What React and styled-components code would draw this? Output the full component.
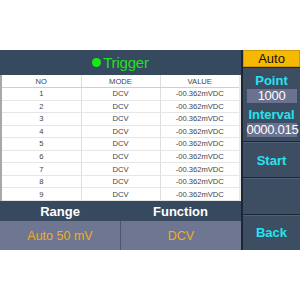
import styled, { createGlobalStyle } from "styled-components";

const rows = [1, 2, 3, 4, 5, 6, 7, 8, 9];

export default function App() {
    return (
        <>
            <Global />
            <Screen>
                <LeftPane>
                    <Title>
                        <Dot />
                        Trigger
                    </Title>
                    <TableWrap>
                        <Table>
                            <thead>
                                <tr>
                                    <th>NO</th>
                                    <th>MODE</th>
                                    <th>VALUE</th>
                                </tr>
                            </thead>
                            <tbody>
                                {rows.map(n => (
                                    <tr key={n}>
                                        <td>{n}</td>
                                        <td>DCV</td>
                                        <td>-00.362mVDC</td>
                                    </tr>
                                ))}
                            </tbody>
                        </Table>
                    </TableWrap>
                    <LabelRow>
                        <span>Range</span>
                        <span>Function</span>
                    </LabelRow>
                    <ValueRow>
                        <ValueCell>Auto 50 mV</ValueCell>
                        <ValueCell>DCV</ValueCell>
                    </ValueRow>
                </LeftPane>
                <RightPane>
                    <AutoButton>Auto</AutoButton>
                    <Settings>
                        <SetLabel>Point</SetLabel>
                        <SetValue>1000</SetValue>
                        <SetLabel>Interval</SetLabel>
                        <SetValue>0000.015</SetValue>
                    </Settings>
                    <SideButton>Start</SideButton>
                    <SideButton />
                    <SideButton>Back</SideButton>
                </RightPane>
            </Screen>
        </>
    );
}

const Global = createGlobalStyle`
    body {
        margin: 0;
        background: #ffffff;
        font-family: "Liberation Sans", Arial, sans-serif;
    }
`

const Screen = styled.div`
    margin-top: 50px;
    width: 300px;
    height: 200px;
    display: flex;
    background-color: #1c2733;
`

const LeftPane = styled.div`
    width: 241px;
    display: flex;
    flex-direction: column;
    background-color: #36495e;
`

const Title = styled.div`
    height: 25px;
    display: flex;
    align-items: center;
    justify-content: center;
    color: #22e022;
    font-size: 15px;
    letter-spacing: -0.2px;
`

const Dot = styled.span`
    width: 9px;
    height: 9px;
    border-radius: 50%;
    background-color: #18e818;
    margin-right: 2px;
`

const TableWrap = styled.div`
    height: 126px;
    background-color: #ffffff;
    border-left: 2px solid #a8a8a8;
    border-right: 2px solid #e8e8e8;
    box-sizing: border-box;
`

const Table = styled.table`
    width: 100%;
    height: 100%;
    border-collapse: collapse;
    table-layout: fixed;
    th, td {
        border-right: 1px solid #dedede;
        border-bottom: 1px solid #e6e6e6;
        text-align: center;
        font-size: 7.6px;
        color: #444444;
        font-weight: normal;
        padding: 0;
    }
    th:last-child, td:last-child {
        border-right: none;
    }
    th {
        height: 12px;
        border-bottom: 1px solid #cfcfcf;
    }
`

const LabelRow = styled.div`
    height: 20px;
    display: grid;
    grid-template-columns: 120px 1fr;
    align-items: center;
    span {
        text-align: center;
        color: #ffffff;
        font-weight: bold;
        font-size: 13px;
    }
`

const ValueRow = styled.div`
    height: 29px;
    display: grid;
    grid-template-columns: 120px 1fr;
`

const ValueCell = styled.div`
    display: flex;
    align-items: center;
    justify-content: center;
    background-color: #6f7692;
    color: #f0ad1c;
    font-size: 12.5px;
    & + & {
        border-left: 1px solid #4a5670;
    }
`

const RightPane = styled.div`
    margin-left: 2px;
    flex: 1;
    display: flex;
    flex-direction: column;
    gap: 1px;
`

const AutoButton = styled.div`
    height: 15px;
    display: flex;
    align-items: center;
    justify-content: center;
    background-color: #f6b800;
    border: 1px solid #d09a00;
    color: #111111;
    font-size: 13px;
`

const Settings = styled.div`
    height: 73px;
    display: flex;
    flex-direction: column;
    align-items: center;
    background-color: #3d4e63;
    padding-top: 5px;
    box-sizing: border-box;
`

const SetLabel = styled.div`
    color: #24e4ef;
    font-weight: bold;
    font-size: 13px;
    line-height: 16px;
    height: 17px;
`

const SetValue = styled.div`
    width: 50px;
    height: 14px;
    background-color: #6a7290;
    color: #ffffff;
    font-size: 13px;
    line-height: 14px;
    text-align: center;
    margin-bottom: 4px;
    letter-spacing: -0.3px;
`

const SideButton = styled.div`
    flex: 1;
    display: flex;
    align-items: center;
    justify-content: center;
    background-color: #3d4e63;
    border-top: 1px solid #4e6077;
    color: #24e4ef;
    font-weight: bold;
    font-size: 13px;
`
